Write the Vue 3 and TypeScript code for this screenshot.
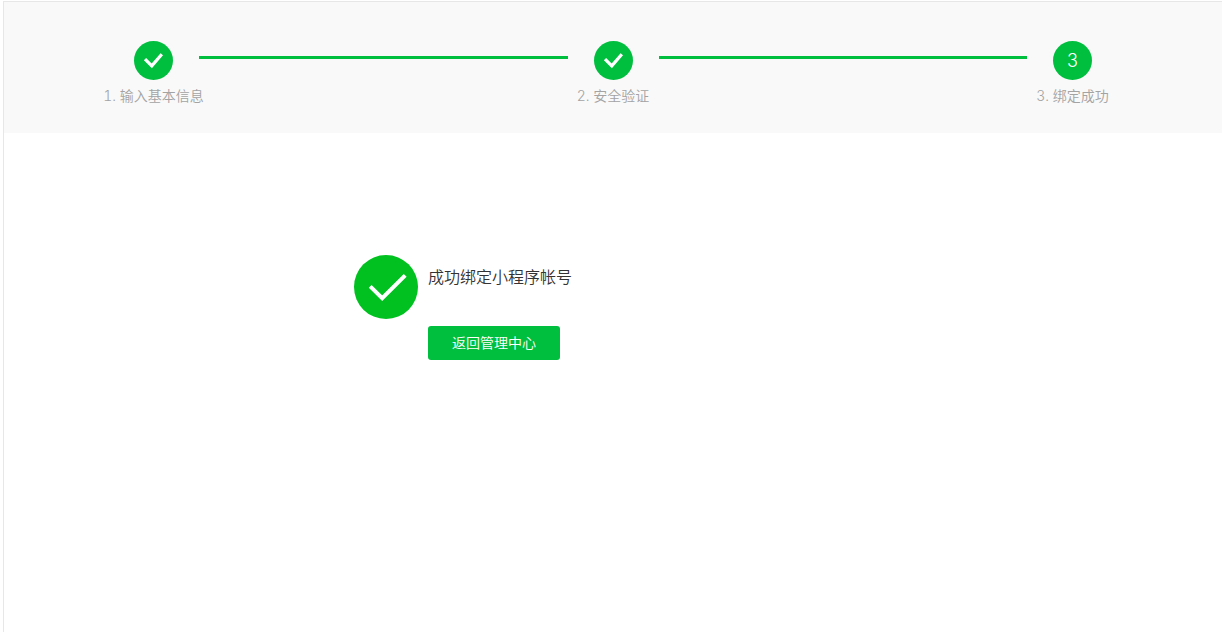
<script setup lang="ts">
interface Step {
  index: number
  title: string
  finished: boolean
}

const steps: Step[] = [
  { index: 1, title: '输入基本信息', finished: true },
  { index: 2, title: '安全验证', finished: true },
  { index: 3, title: '绑定成功', finished: false },
]
</script>

<template>
  <div class="page">
    <header class="wizard">
      <ol class="steps">
        <template v-for="step in steps" :key="step.index">
          <li v-if="step.index > 1" class="line" aria-hidden="true"></li>
          <li class="step">
            <span class="badge">
              <svg v-if="step.finished" class="tick" viewBox="0 0 39 39" aria-hidden="true">
                <path d="M11 18.2 L17.8 24.9 L27.8 13.2" />
              </svg>
              <template v-else>{{ step.index }}</template>
            </span>
            <span class="label">{{ step.index }}. {{ step.title }}</span>
          </li>
        </template>
      </ol>
    </header>
    <main class="result">
      <svg class="success" viewBox="0 0 64 64" aria-hidden="true">
        <circle cx="32" cy="32" r="32" />
        <path d="M16.2 31.4 L28.2 43.2 L51.2 20.4" />
      </svg>
      <div class="detail">
        <h1 class="message">成功绑定小程序帐号</h1>
        <button class="back" type="button">返回管理中心</button>
      </div>
    </main>
  </div>
</template>

<style>
body {
  margin: 0;
  background: #fff;
}
</style>

<style scoped>
.page {
  box-sizing: border-box;
  min-height: calc(100vh - 1px);
  margin: 1px 0 0 3px;
  border-top: 1px solid #e7e7e7;
  border-left: 1px solid #e7e7e7;
  font-family: Inter, "Noto Sans CJK SC", sans-serif;
  font-weight: 350;
}

.wizard {
  padding: 39px 104px 27px;
  background: #f9f9f9;
}

.steps {
  display: flex;
  margin: 0;
  padding: 0;
  list-style: none;
}

.step {
  display: flex;
  flex: 0 0 91px;
  flex-direction: column;
  align-items: center;
  gap: 6px;
  min-width: 0;
}

.line {
  flex: 1;
  height: 3px;
  margin-top: 15px;
  background: #00bf3f;
}

.badge {
  display: flex;
  align-items: center;
  justify-content: center;
  width: 39px;
  height: 39px;
  border-radius: 50%;
  background: #00bf3f;
  color: #fff;
  font-size: 18px;
  font-weight: 300;
  line-height: 39px;
}

.tick {
  width: 39px;
  height: 39px;
  fill: none;
  stroke: #fff;
  stroke-width: 3.2;
}

.label {
  color: #a3a3a3;
  font-size: 14px;
  font-variant-numeric: tabular-nums;
  line-height: 20px;
  white-space: nowrap;
}

.result {
  display: flex;
  gap: 10px;
  padding: 122px 20px 40px 350px;
}

.success {
  flex: none;
  width: 64px;
  height: 64px;
}

.success circle {
  fill: #00c120;
}

.success path {
  fill: none;
  stroke: #fff;
  stroke-width: 4;
}

.detail {
  padding-top: 10px;
}

.message {
  margin: 0 0 37px;
  color: #333;
  font-size: 16px;
  font-weight: 350;
  line-height: 24px;
}

.back {
  display: block;
  width: 132px;
  height: 34px;
  padding: 0;
  border: 0;
  border-radius: 3px;
  background: #00bf3f;
  color: #fff;
  font: inherit;
  font-size: 14px;
  line-height: 34px;
  cursor: pointer;
}
</style>
